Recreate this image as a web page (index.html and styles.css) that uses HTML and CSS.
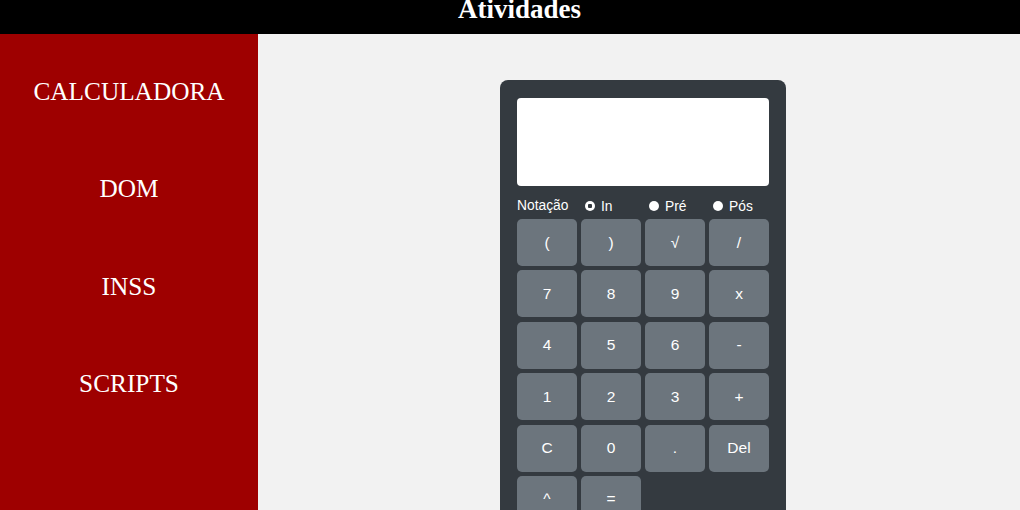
FILE: index.html
```html
<!DOCTYPE html>
<html lang="pt-BR">
<head>
<meta charset="utf-8">
<title>Atividades</title>
<link rel="stylesheet" href="styles.css">
</head>
<body>
<header class="topbar">
  <h1 class="title">Atividades</h1>
</header>
<div class="layout">
  <nav class="sidebar">
    <a class="nav-item" href="#">CALCULADORA</a>
    <a class="nav-item" href="#">DOM</a>
    <a class="nav-item" href="#">INSS</a>
    <a class="nav-item" href="#">SCRIPTS</a>
  </nav>
  <main class="content">
    <div class="calc">
      <div class="display"></div>
      <div class="notation">
        <span class="notation-label">Notação</span>
        <label class="opt"><input type="radio" name="n" checked><span>In</span></label>
        <label class="opt"><input type="radio" name="n"><span>Pré</span></label>
        <label class="opt"><input type="radio" name="n"><span>Pós</span></label>
      </div>
      <div class="keys">
        <button class="key">(</button>
        <button class="key">)</button>
        <button class="key">√</button>
        <button class="key">/</button>
        <button class="key">7</button>
        <button class="key">8</button>
        <button class="key">9</button>
        <button class="key">x</button>
        <button class="key">4</button>
        <button class="key">5</button>
        <button class="key">6</button>
        <button class="key">-</button>
        <button class="key">1</button>
        <button class="key">2</button>
        <button class="key">3</button>
        <button class="key">+</button>
        <button class="key">C</button>
        <button class="key">0</button>
        <button class="key">.</button>
        <button class="key">Del</button>
        <button class="key">^</button>
        <button class="key">=</button>
      </div>
    </div>
  </main>
</div>
</body>
</html>
```
FILE: styles.css
```css
html, body {
  margin: 0;
  padding: 0;
  height: 100%;
  overflow: hidden;
}
body {
  font-family: "Liberation Serif", "Times New Roman", serif;
  background: #f2f2f2;
}
.topbar {
  height: 34px;
  background: #000;
  display: flex;
  justify-content: center;
  padding-left: 19px;
  overflow: hidden;
}
.title {
  margin: -4px 0 0;
  font-size: 27px;
  line-height: 27px;
  font-weight: bold;
  color: #fff;
}
.layout {
  display: flex;
  height: calc(100% - 34px);
}
.sidebar {
  width: 258px;
  flex-shrink: 0;
  background: #9e0000;
  display: flex;
  flex-direction: column;
  align-items: center;
  padding-top: 40px;
  gap: 63.4px;
}
.nav-item {
  color: #fff;
  text-decoration: none;
  font-size: 25.3px;
  line-height: 34px;
}
.content {
  flex: 1;
  display: flex;
  justify-content: center;
  align-items: flex-start;
  padding-top: 46px;
  padding-left: 8px;
}
.calc {
  width: 286px;
  box-sizing: border-box;
  background: #343a40;
  border-radius: 8px;
  padding: 18px 17px 20px;
  font-family: "Liberation Sans", Arial, sans-serif;
  color: #fff;
}
.display {
  height: 88px;
  background: #fff;
  border-radius: 4px;
}
.notation {
  display: grid;
  grid-template-columns: repeat(4, 1fr);
  column-gap: 4px;
  height: 28px;
  padding-top: 5px;
  align-items: center;
  font-size: 13.8px;
}
.notation-label {
  margin-top: 0;
}
.opt {
  display: flex;
  align-items: center;
  gap: 6px;
  padding-left: 4px;
  margin-top: 3px;
}
.opt input {
  appearance: none;
  -webkit-appearance: none;
  width: 10px;
  height: 10px;
  margin: -2px 0 0;
  border-radius: 50%;
  background: #fff;
}
.opt input:checked {
  background: radial-gradient(circle, #343a40 0 2px, #fff 2.5px);
}
.keys {
  display: grid;
  grid-template-columns: repeat(4, 60px);
  grid-auto-rows: 47px;
  column-gap: 4px;
  row-gap: 4.4px;
}
.key {
  border: none;
  border-radius: 5px;
  background: #6c757d;
  color: #fff;
  font-family: "Liberation Sans", Arial, sans-serif;
  font-size: 15.5px;
  padding: 0;
}
```
